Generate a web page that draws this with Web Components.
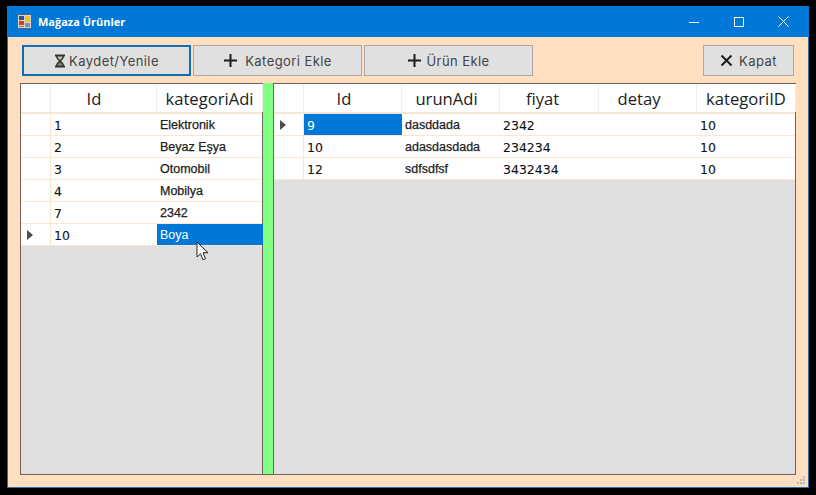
<!DOCTYPE html>
<html>
<head>
<meta charset="utf-8">
<title>Mağaza Ürünler</title>
<style>
html, body { margin: 0; height: 100%; background: #000; overflow: hidden; }
body { padding: 6px 0 0 7px; box-sizing: border-box; }
</style>
</head>
<body>
<form-window caption="Mağaza Ürünler">
    <tool-button slot="tools" primary icon="hourglass" label="Kaydet/Yenile"></tool-button>
    <tool-button slot="tools" icon="plus" label="Kategori Ekle" style="--gap:7px"></tool-button>
    <tool-button slot="tools" icon="plus" label="Ürün Ekle" style="--gap:4px"></tool-button>
    <tool-button slot="close" icon="cross" label="Kapat" style="--w:91px;--gap:6px"></tool-button>
    <data-grid slot="left" id="kategori" style="width:243px"></data-grid>
    <data-grid slot="right" id="urun" style="width:523px"></data-grid>
</form-window>

<script>
const ICONS = {
    hourglass: '<svg width="12" height="14" viewBox="0 0 12 14"><path d="M1 .5h10v2H10C10 5 8 6 7 7c1 1 3 2 3 4.500h1v2H1v-2h1C2 9 4 8 5 7 4 6 2 5 2 2.500H1z" fill="#333"/><path d="M3.500 2.500h5C8.300 4 7 5 6 6 5 5 3.700 4 3.500 2.500z" fill="#c9c2ae"/><path d="M3.500 11.500C3.800 10 5 9 6 8.500 7 9 8.200 10 8.500 11.500z" fill="#8d8a80"/></svg>',
    plus: '<svg width="15" height="15" viewBox="0 0 15 15"><path d="M7.500 1v13M1 7.500h13" stroke="#1c1c1c" stroke-width="2" fill="none"/></svg>',
    cross: '<svg width="13" height="13" viewBox="0 0 13 13"><path d="M1.500 1.500l10 10M11.500 1.500l-10 10" stroke="#1c1c1c" stroke-width="2" fill="none"/></svg>'
};

class ToolButton extends HTMLElement {
    constructor() {
        super();
        this.attachShadow({ mode: 'open' });
    }

    connectedCallback() {
        const icon = ICONS[this.getAttribute('icon')];
        this.shadowRoot.innerHTML = `
            <style>
                :host {
                    display: flex;
                    align-items: center;
                    justify-content: center;
                    gap: var(--gap, 3px);
                    box-sizing: border-box;
                    width: var(--w, 169px);
                    height: 31px;
                    background: #e0e0e0;
                    border: 1px solid #aba9a2;
                    color: #444;
                    font: 13px "Inter", "Open Sans", sans-serif;
                    letter-spacing: .42px;
                }
                :host([primary]) {
                    border: 2px solid #0f6cb5;
                }
                svg { display: block; }
            </style>
            ${icon}<span>${this.getAttribute('label')}</span>
        `;
    }
}
customElements.define('tool-button', ToolButton);

class DataGrid extends HTMLElement {
    constructor() {
        super();
        this.attachShadow({ mode: 'open' });
    }

    // data: columns [{title, width, pad}], rows [[...]], selected [row, col]
    set data(d) {
        const head = d.columns.map(c => `<div class="hd" style="width:${c.width}px;padding-right:${c.pad || 0}px">${c.title}</div>`).join('');
        const rows = d.rows.map((r, i) => {
            const cells = r.map((v, j) => {
                const sel = d.selected[0] === i && d.selected[1] === j ? ' sel' : '';
                const txt = d.columns[j].text ? ' txt' : '';
                return `<div class="c${sel}${txt}" style="width:${d.columns[j].width}px">${v}</div>`;
            }).join('');
            const mark = d.selected[0] === i ? '<i></i>' : '';
            return `<div class="row"><div class="rh">${mark}</div>${cells}</div>`;
        }).join('');
        this.shadowRoot.innerHTML = `
            <style>
                :host {
                    display: flex;
                    flex-direction: column;
                    box-sizing: border-box;
                    height: 392px;
                    background: #dfdfdf;
                    border: 1px solid #6d6459;
                }
                .row { display: flex; height: 22px; box-sizing: border-box; background: #fff; border-bottom: 1px solid #fbe6cf; }
                .row.head { height: 30px; border-bottom: 2px solid #f7e6d3; }
                .rh { box-sizing: border-box; width: 30px; flex: none; border-right: 1px solid #fbe6cf; position: relative; }
                .head .rh, .hd { border-right: 1px solid #f1ece4; }
                .hd {
                    box-sizing: border-box;
                    flex: none;
                    text-align: center;
                    font: 16.6px/29px "Open Sans", sans-serif;
                    color: #1c1c1c;
                }
                .c {
                    box-sizing: border-box;
                    flex: none;
                    padding-left: 3px;
                    font: 12.500px/23px "DejaVu Sans", sans-serif;
                    color: #111;
                    -webkit-text-stroke: .1px #111;
                }
                .c.txt { font: 12.500px/23px "Liberation Sans", sans-serif; color: #222; -webkit-text-stroke: .25px #222; }
                .c.sel { background: #0078d7; color: #fff; -webkit-text-stroke: 0; }
                i {
                    position: absolute;
                    left: 6px;
                    top: 6px;
                    border-left: 6px solid #4c4c4c;
                    border-top: 5px solid transparent;
                    border-bottom: 5px solid transparent;
                }
            </style>
            <div class="row head"><div class="rh"></div>${head}</div>
            ${rows}
        `;
    }
}
customElements.define('data-grid', DataGrid);

class FormWindow extends HTMLElement {
    constructor() {
        super();
        const root = this.attachShadow({ mode: 'open' });
        root.innerHTML = `
            <style>
                :host {
                    display: flex;
                    flex-direction: column;
                    box-sizing: border-box;
                    width: 802px;
                    height: 482px;
                    background: #ffdfc0;
                    border: 1px solid #2f6ea5;
                    border-top: 0;
                    position: relative;
                }
                .title {
                    display: flex;
                    align-items: center;
                    height: 31px;
                    flex: none;
                    background: #0078d7;
                    margin: 0 -1px;
                    padding: 0 3px 0 10px;
                    color: #fff;
                    font: bold 11px "Open Sans", sans-serif;
                }
                .title svg.logo { margin-right: 6px; }
                .title span { flex: 1; }
                .ctl { width: 45px; display: flex; justify-content: center; align-items: center; height: 31px; }
                .tools { display: flex; gap: 2px; margin: 8px 14px 0 14px; }
                .tools .spring { flex: 1; }
                .split { display: flex; margin: 7px 0 0 12px; }
                .bar { width: 10px; background: #80ff80; box-sizing: border-box; border-bottom: 1px solid #6d6459; }
                .grip { position: absolute; right: 2px; bottom: 2px; }
            </style>
            <div class="title">
                <svg class="logo" width="15" height="15" viewBox="0 0 15 15">
                    <rect x=".5" y=".5" width="14" height="14" fill="#d8d4c8" stroke="#56617a"/>
                    <rect x="2" y="2" width="5" height="4" fill="#3a4f8a"/>
                    <rect x="8" y="2" width="5" height="6" fill="#f2c230"/>
                    <rect x="2" y="7" width="5" height="4" fill="#d83a28"/>
                    <rect x="2" y="12" width="5" height="1" fill="#6c7f9a"/>
                    <rect x="8" y="9" width="5" height="4" fill="#7f93ad"/>
                </svg>
                <span>${this.getAttribute('caption')}</span>
                <div class="ctl"><svg width="10" height="10"><path d="M0 5.500h10" stroke="#fff"/></svg></div>
                <div class="ctl"><svg width="10" height="10"><rect x=".5" y=".5" width="9" height="9" fill="none" stroke="#fff"/></svg></div>
                <div class="ctl"><svg width="11" height="11"><path d="M.5 .5l10 10M10.500 .5l-10 10" stroke="#fff" fill="none"/></svg></div>
            </div>
            <div class="tools">
                <slot name="tools"></slot>
                <div class="spring"></div>
                <slot name="close"></slot>
            </div>
            <div class="split">
                <slot name="left"></slot>
                <div class="bar"></div>
                <slot name="right"></slot>
            </div>
            <svg class="grip" width="9" height="9" fill="#bdb7ad">
                <rect x="6" y="0" width="2" height="2"/><rect x="3" y="3" width="2" height="2"/><rect x="6" y="3" width="2" height="2"/>
                <rect x="0" y="6" width="2" height="2"/><rect x="3" y="6" width="2" height="2"/><rect x="6" y="6" width="2" height="2"/>
            </svg>
        `;
    }
}
customElements.define('form-window', FormWindow);

document.getElementById('kategori').data = {
    columns: [{ title: 'Id', width: 106, pad: 19 }, { title: 'kategoriAdi', width: 106, text: true }],
    selected: [5, 1],
    rows: [['1', 'Elektronik'], ['2', 'Beyaz Eşya'], ['3', 'Otomobil'], ['4', 'Mobilya'], ['7', '2342'], ['10', 'Boya']]
};
document.getElementById('urun').data = {
    columns: [
        { title: 'Id', width: 98, pad: 17 }, { title: 'urunAdi', width: 98, pad: 8, text: true }, { title: 'fiyat', width: 99, pad: 13 },
        { title: 'detay', width: 98, pad: 17 }, { title: 'kategoriID', width: 99 }
    ],
    selected: [0, 0],
    rows: [['9', 'dasddada', '2342', '', '10'], ['10', 'adasdasdada', '234234', '', '10'], ['12', 'sdfsdfsf', '3432434', '', '10']]
};
</script>
<svg style="position:absolute;left:196px;top:241px" width="14" height="21" viewBox="0 0 14 21"><path d="M1 1v15l3.500-3.300 2.500 6 2.500-1-2.500-6H12z" fill="#fff" stroke="#222"/></svg>
</body>
</html>
